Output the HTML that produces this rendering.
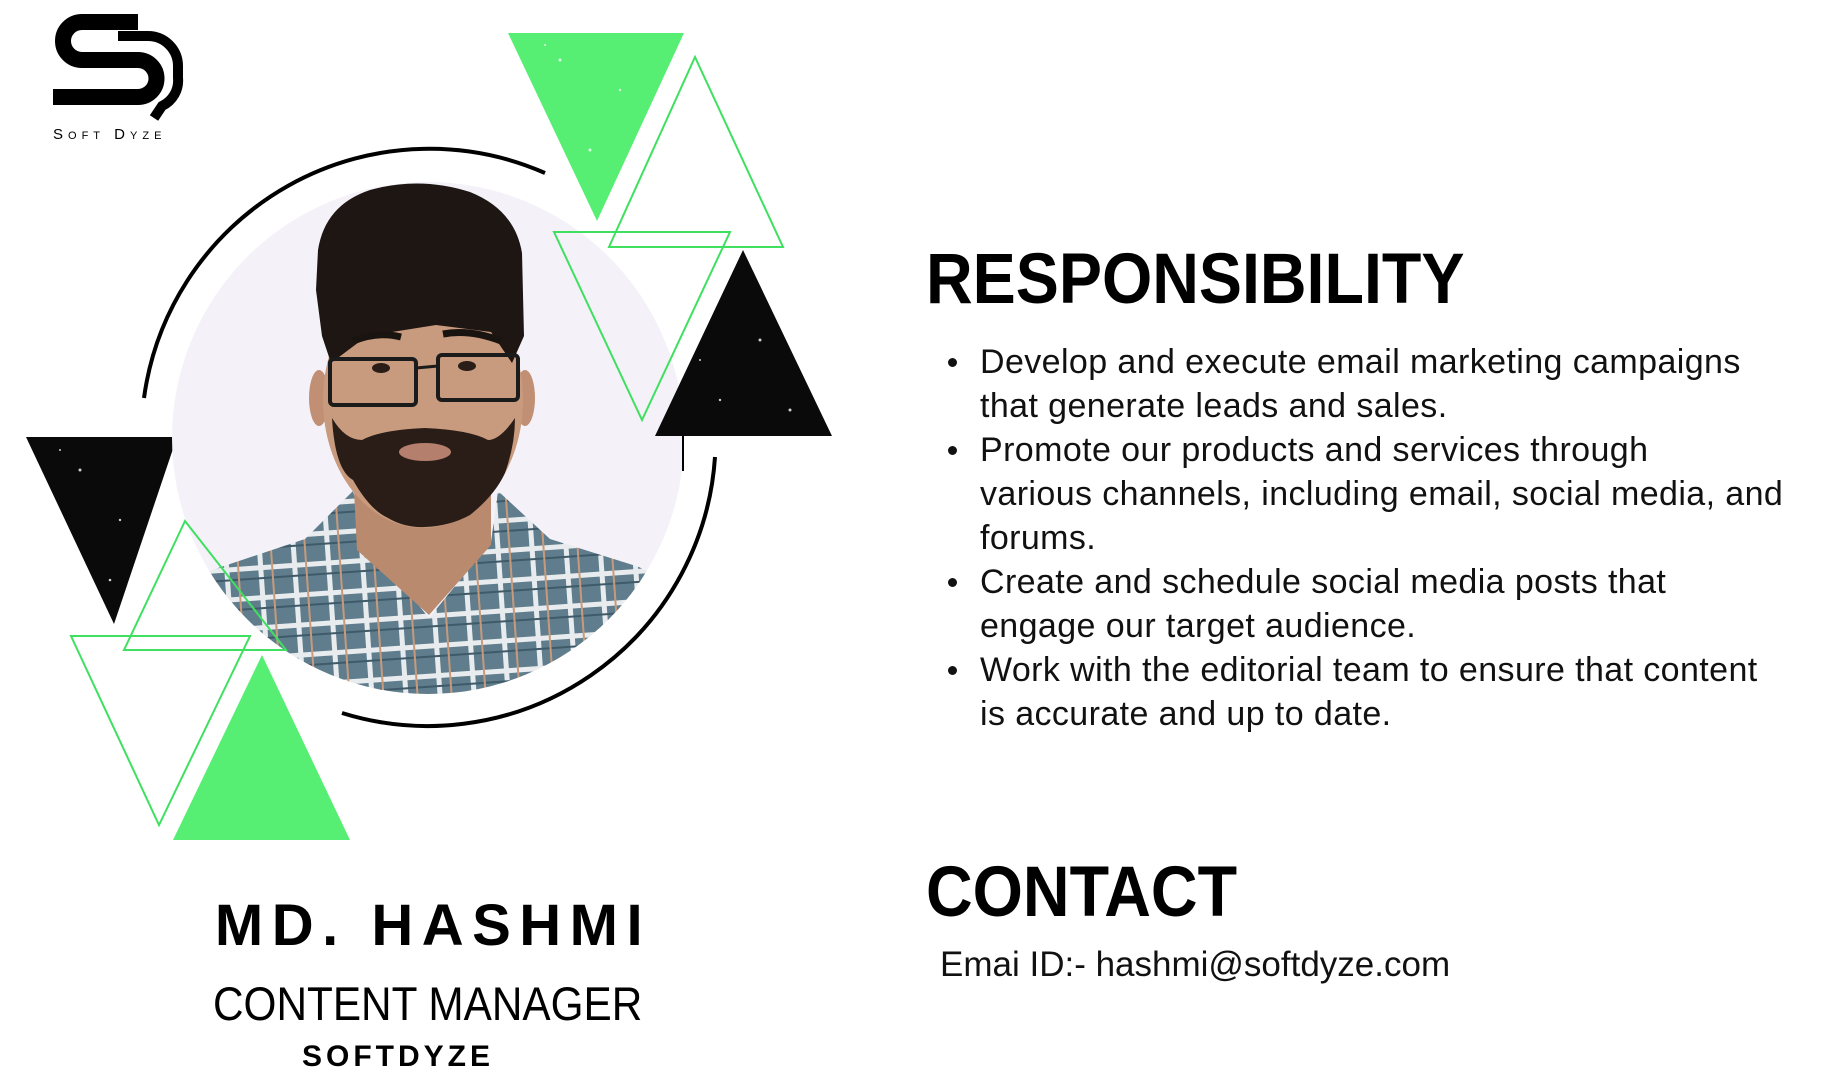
<!DOCTYPE html>
<html><head><meta charset="utf-8"><style>
html,body{margin:0;padding:0;background:#fff;width:1829px;height:1075px;overflow:hidden;position:relative;font-family:"Liberation Sans",sans-serif;color:#000}
.a{position:absolute;white-space:nowrap}
.h{font-weight:bold;font-size:71px;line-height:71px;transform:scaleX(0.91);transform-origin:0 0}
ul{position:absolute;left:980px;top:340px;margin:0;padding:0;list-style:none;font-size:34px;line-height:44px;letter-spacing:0.4px;color:#111}
li{position:relative;white-space:nowrap}
li:before{content:"";position:absolute;left:-32px;top:18px;width:9px;height:9px;border-radius:50%;background:#111}
</style></head><body>
<svg class="a" style="left:0;top:0" width="900" height="900" viewBox="0 0 900 900">
<defs>
<clipPath id="c"><circle cx="428" cy="438" r="256"/></clipPath>
<pattern id="p" width="34" height="30" patternUnits="userSpaceOnUse" patternTransform="rotate(-4)">
<rect width="34" height="30" fill="#5f7d8c"/>
<rect x="0" y="12" width="34" height="5" fill="#e8ecee"/>
<rect x="14" y="0" width="5" height="30" fill="#e8ecee"/>
<rect x="0" y="24" width="34" height="2" fill="#3f5a68"/>
<rect x="27" y="0" width="2" height="30" fill="#c89a7c"/>
</pattern>
</defs>
<path d="M138 22 L82 22 A19 19 0 0 0 82 60 L138 60 A18.5 18.5 0 0 1 138 97 L53 97" fill="none" stroke="#000" stroke-width="16"/>
<path d="M118 36 H148 A30 30 0 0 1 178 66 V78 A28 28 0 0 1 162 106 L154 118" fill="none" stroke="#000" stroke-width="10"/>
<text x="53" y="139" font-family="Liberation Sans, sans-serif" font-size="15" letter-spacing="5">S<tspan font-size="11">OFT</tspan> D<tspan font-size="11">YZE</tspan></text>
<polygon points="26,437 177,437 114,624" fill="#0a0a0a"/>
<path d="M545 173 A288 288 0 0 0 144 398" fill="none" stroke="#000" stroke-width="4"/>
<path d="M715 457 A288 288 0 0 1 342 713" fill="none" stroke="#000" stroke-width="4"/>
<g clip-path="url(#c)">
<rect x="170" y="180" width="520" height="520" fill="#f4f2f8"/>
<polygon points="212,570 305,539 353,491 367,542 429,618 491,542 498,491 550,539 639,567 700,600 700,720 160,720 160,600" fill="url(#p)"/>
<polygon points="353,470 491,470 491,545 429,615 357,550" fill="#b98a6e"/>
<ellipse cx="319" cy="398" rx="10" ry="28" fill="#c08f74"/>
<ellipse cx="525" cy="398" rx="10" ry="28" fill="#c08f74"/>
<ellipse cx="423" cy="400" rx="100" ry="128" fill="#c89a7e"/>
<path d="M332 418 Q335 470 353 480 Q370 510 388 518 Q405 528 425 527 Q450 526 470 515 Q495 495 505 473 Q515 445 515 418 Q500 440 488 440 Q470 430 425 428 Q380 430 362 440 Q345 440 332 418Z" fill="#2a1d17"/>
<ellipse cx="425" cy="452" rx="26" ry="9" fill="#b47f6c"/>
<path d="M318 250 Q325 205 370 190 Q420 176 470 192 Q515 210 522 253 L524 336 L512 363 L491 332 L436 325 L367 336 L331 363 L322 336 L316 290Z" fill="#1d1612"/>
<path d="M353 341 Q378 331 401 337" stroke="#1a1410" stroke-width="7" fill="none"/>
<path d="M443 334 Q470 329 501 341" stroke="#1a1410" stroke-width="7" fill="none"/>
<ellipse cx="381" cy="368" rx="9" ry="5" fill="#2a1d17"/>
<ellipse cx="467" cy="366" rx="9" ry="5" fill="#2a1d17"/>
<rect x="330" y="359" width="86" height="46" rx="4" fill="none" stroke="#1b1b1b" stroke-width="4"/>
<rect x="438" y="355" width="80" height="45" rx="4" fill="none" stroke="#1b1b1b" stroke-width="4"/>
<path d="M416 368 L438 366" stroke="#1b1b1b" stroke-width="3"/>
</g>
<line x1="683" y1="436" x2="683" y2="471" stroke="#000" stroke-width="2"/>
<polygon points="508,33 684,33 597,221" fill="#57ef73"/>
<polygon points="695,57 609,247 783,247" fill="none" stroke="#3fe060" stroke-width="2"/>
<polygon points="554,232 730,232 642,420" fill="none" stroke="#3fe060" stroke-width="2"/>
<polygon points="743,250 655,436 832,436" fill="#0a0a0a"/>
<polygon points="185,521 124,650 286,650" fill="none" stroke="#3fe060" stroke-width="2"/>
<polygon points="71,636 250,636 159,825" fill="none" stroke="#3fe060" stroke-width="2"/>
<polygon points="262,655 173,840 350,840" fill="#57ef73"/>
<g fill="#fff" opacity=".8">
<circle cx="560" cy="60" r="1.5"/><circle cx="620" cy="90" r="1.2"/><circle cx="590" cy="150" r="1.5"/><circle cx="545" cy="45" r="1"/>
<circle cx="760" cy="340" r="1.5"/><circle cx="720" cy="400" r="1.2"/><circle cx="790" cy="410" r="1.5"/><circle cx="700" cy="360" r="1"/>
<circle cx="80" cy="470" r="1.5"/><circle cx="120" cy="520" r="1.2"/><circle cx="60" cy="450" r="1"/><circle cx="110" cy="580" r="1.3"/>
</g>
</svg>
<div class="a h" style="left:926px;top:244px">RESPONSIBILITY</div>
<ul>
<li>Develop and execute email marketing campaigns<br>that generate leads and sales.</li>
<li>Promote our products and services through<br>various channels, including email, social media, and<br>forums.</li>
<li>Create and schedule social media posts that<br>engage our target audience.</li>
<li>Work with the editorial team to ensure that content<br>is accurate and up to date.</li>
</ul>
<div class="a h" style="left:926px;top:857px">CONTACT</div>
<div class="a" style="left:940px;top:945px;font-size:35px;line-height:40px;color:#111">Emai ID:- hashmi@softdyze.com</div>
<div class="a" style="left:0;width:866px;text-align:center;top:897px;font-size:58px;line-height:58px;font-weight:bold;letter-spacing:8.5px">MD. HASHMI</div>
<div class="a" style="left:213px;top:980px;font-size:47px;line-height:47px;transform:scaleX(0.9);transform-origin:0 0">CONTENT MANAGER</div>
<div class="a" style="left:0;width:796px;text-align:center;top:1042px;font-size:30px;line-height:30px;font-weight:bold;letter-spacing:4px">SOFTDYZE</div>
</body></html>
